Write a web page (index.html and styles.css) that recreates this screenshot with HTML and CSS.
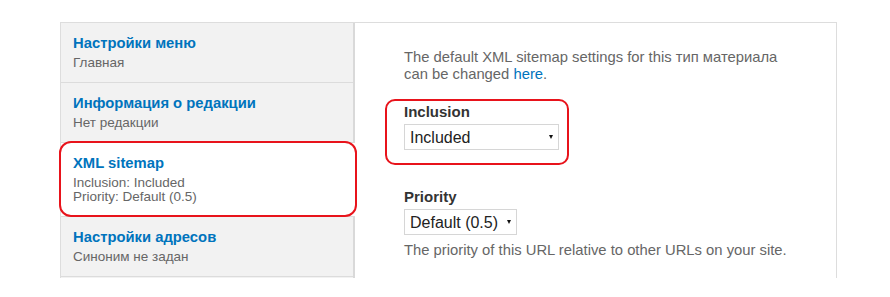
FILE: index.html
```html
<!DOCTYPE html>
<html lang="ru">
<head>
    <meta charset="UTF-8">
    <title>Node settings</title>
    <link rel="stylesheet" href="styles.css">
</head>
<body>

    <div class="page">
        <div class="tabs">
            <ul class="tabs-list">
                <li class="tab">
                    <a href="#" class="tab-title">Настройки меню</a>
                    <div class="tab-summary">Главная</div>
                </li>
                <li class="tab">
                    <a href="#" class="tab-title">Информация о редакции</a>
                    <div class="tab-summary">Нет редакции</div>
                </li>
                <li class="tab selected">
                    <a href="#" class="tab-title">XML sitemap</a>
                    <div class="tab-summary">Inclusion: Included<br>Priority: Default (0.5)</div>
                    <span class="mark mark-tab"></span>
                </li>
                <li class="tab">
                    <a href="#" class="tab-title">Настройки адресов</a>
                    <div class="tab-summary">Синоним не задан</div>
                </li>
            </ul>

            <div class="pane">
                <p class="description">The default XML sitemap settings for this тип материала can be changed <a href="#">here</a>.</p>

                <div class="form-item">
                    <label for="inclusion">Inclusion</label>
                    <span class="select-wrap wide">
                        <select id="inclusion">
                            <option>Included</option>
                            <option>Excluded</option>
                        </select>
                    </span>
                    <span class="mark mark-field"></span>
                </div>

                <div class="form-item priority">
                    <label for="priority">Priority</label>
                    <span class="select-wrap">
                        <select id="priority">
                            <option>Default (0.5)</option>
                            <option>1.0</option>
                            <option>0.0</option>
                        </select>
                    </span>
                    <div class="help">The priority of this URL relative to other URLs on your site.</div>
                </div>
            </div>
        </div>
    </div>

</body>
</html>
```

FILE: styles.css
```css
/* General styling */
body {
    margin: 0;
    background: #fff;
    font-family: 'Liberation Sans', Arial, sans-serif;
    color: #333;
}

.page {
    padding: 22px 0 0 60px;
    height: 256px;
    overflow: hidden;
}

.tabs {
    display: flex;
    width: 775px;
    height: 300px;
    border: 1px solid #ddd;
    border-bottom: none;
}

/* Vertical tab list */
.tabs-list {
    list-style: none;
    margin: 0;
    padding: 0;
    width: 292px;
    flex-shrink: 0;
    background: #f2f2f2;
    border-right: 2px solid #d9d9d9;
}

.tab {
    position: relative;
    padding: 10px 12px 12px 12px;
    border-bottom: 1px solid #dcdcdc;
}

.tab.selected {
    background: #fff;
    margin-right: -2px;
}

.tab-title {
    display: block;
    font-size: 14.8px;
    line-height: 20px;
    font-weight: bold;
    color: #0074bd;
    text-decoration: none;
}

.tab-summary {
    margin-top: 3px;
    font-size: 13.5px;
    line-height: 14px;
    color: #666;
}

/* Settings pane */
.pane {
    flex: 1;
    padding: 26px 48px 0 49px;
}

.description {
    margin: 0;
    width: 400px;
    font-size: 14.8px;
    line-height: 17px;
    color: #666;
}

.description a {
    color: #0074bd;
    text-decoration: none;
}

.form-item {
    position: relative;
    margin-top: 20px;
}

.form-item label {
    display: block;
    font-size: 15px;
    line-height: 18px;
    font-weight: bold;
    color: #333;
    margin-bottom: 3px;
}

.form-item.priority {
    margin-top: 38px;
}

.select-wrap {
    position: relative;
    display: inline-block;
}

.select-wrap select {
    appearance: none;
    -webkit-appearance: none;
    font-family: 'Liberation Sans', Arial, sans-serif;
    font-size: 16px;
    color: #222;
    height: 26px;
    width: 113px;
    padding: 0 0 0 5px;
    border: 1px solid #d6d6d6;
    border-radius: 0;
    background: #fff;
    margin: 0;
}

.select-wrap.wide select {
    width: 155px;
}

.select-wrap::after {
    content: "";
    position: absolute;
    right: 6px;
    top: 11px;
    border-left: 2.5px solid transparent;
    border-right: 2.5px solid transparent;
    border-top: 4px solid #111;
}

.help {
    margin-top: 7px;
    font-size: 14.8px;
    line-height: 17px;
    color: #666;
}

/* Red annotation frames */
.mark {
    position: absolute;
    border: 2px solid #e8131b;
    pointer-events: none;
}

.mark-tab {
    left: -2px;
    top: -2px;
    width: 294px;
    height: 72px;
    border-radius: 12px;
}

.mark-field {
    left: -19px;
    top: -4px;
    width: 180px;
    height: 62px;
    border-radius: 10px;
}
```
